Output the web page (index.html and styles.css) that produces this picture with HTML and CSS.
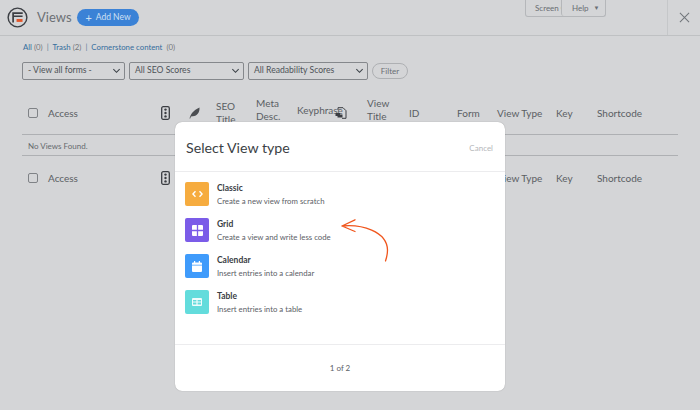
FILE: index.html
```html
<!DOCTYPE html>
<html lang="en">
<head>
<meta charset="utf-8">
<title>Views</title>
<link rel="stylesheet" href="styles.css">
</head>
<body>
<div class="page">
  <header class="topbar">
    <svg class="logo" viewBox="0 0 22 22"><circle cx="11" cy="11" r="9.800" fill="none" stroke="#3c3f44" stroke-width="1.500"/><path d="M5.500 5.500h11v1.800H7.300v1.600h9v1.500h-9v5.800H5.500z" fill="#3c3f44"/><rect x="10" y="12.600" width="6.300" height="3" fill="#e4562a"/></svg>
    <h1 class="title">Views</h1>
    <a class="add-new"><span class="plus">+</span> Add New</a>
    <div class="tabs">
      <span class="tab tab-screen">Screen Options</span>
      <span class="tab tab-help">Help <i class="caret">▼</i></span>
    </div>
    <div class="close"><svg viewBox="0 0 12 12" width="11" height="11"><path d="M1 1l10 10M11 1L1 11" stroke="#70757a" stroke-width="1.100" fill="none"/></svg></div>
  </header>
  <main class="content">
    <ul class="subsub">
      <li><a>All</a> (0)</li><li class="sep">|</li>
      <li><a>Trash</a> (2)</li><li class="sep">|</li>
      <li><a>Cornerstone content</a> &nbsp;(0)</li>
    </ul>
    <div class="filters">
      <div class="select s1">- View all forms -<svg class="chev" viewBox="0 0 10 6"><path d="M1.500 1l3.500 3.500L8.500 1" fill="none" stroke="#3c4248" stroke-width="1.200"/></svg></div>
      <div class="select s2">All SEO Scores<svg class="chev" viewBox="0 0 10 6"><path d="M1.500 1l3.500 3.500L8.500 1" fill="none" stroke="#3c4248" stroke-width="1.200"/></svg></div>
      <div class="select s3">All Readability Scores<svg class="chev" viewBox="0 0 10 6"><path d="M1.500 1l3.500 3.500L8.500 1" fill="none" stroke="#3c4248" stroke-width="1.200"/></svg></div>
      <button class="filter">Filter</button>
    </div>
    <div class="table">
      <div class="row head">
        <span class="cb"></span><span>Access</span>
        <svg class="ico-traffic" viewBox="0 0 9 14"><rect x=".7" y=".7" width="7.600" height="12.600" rx="1.500" fill="none" stroke="#3a3d42" stroke-width="1.300"/><circle cx="4.500" cy="3.600" r="1.200" fill="#3a3d42"/><circle cx="4.500" cy="7" r="1.200" fill="#3a3d42"/><circle cx="4.500" cy="10.400" r="1.200" fill="#3a3d42"/></svg>
        <svg class="ico-feather" viewBox="0 0 11 12"><path d="M.5 11.500C1.500 8 3.500 3.500 10.500.5 10.800 5 8.500 9 3.800 9.300L2 9.500 1.200 11.500z" fill="#4b4e52"/></svg>
        <span class="narrow">SEO Title</span><span class="narrow raise">Meta Desc.</span><span class="nowrap raise-sm">Keyphrase</span>
        <svg class="ico-links" viewBox="0 0 12 12"><path d="M3 3V.7h5l3 3v7.600H7" fill="none" stroke="#3a3d42" stroke-width="1"/><path d="M.5 6h4.500v1.500h2.500v3H2.500V9H.5z" fill="#3a3d42"/></svg>
        <span class="narrow raise">View Title</span><span>ID</span><span>Form</span><span>View Type</span><span>Key</span><span>Shortcode</span>
      </div>
      <div class="empty">No Views Found.</div>
      <div class="row foot">
        <span class="cb"></span><span>Access</span>
        <svg class="ico-traffic" viewBox="0 0 9 14"><rect x=".7" y=".7" width="7.600" height="12.600" rx="1.500" fill="none" stroke="#3a3d42" stroke-width="1.300"/><circle cx="4.500" cy="3.600" r="1.200" fill="#3a3d42"/><circle cx="4.500" cy="7" r="1.200" fill="#3a3d42"/><circle cx="4.500" cy="10.400" r="1.200" fill="#3a3d42"/></svg>
        <span></span><span></span><span></span><span></span><span></span><span></span><span></span><span></span>
        <span>View Type</span><span>Key</span><span>Shortcode</span>
      </div>
    </div>
  </main>
</div>
<section class="modal">
  <div class="modal-head"><h2>Select View type</h2><a class="cancel">Cancel</a></div>
  <div class="modal-body">
    <div class="type"><span class="tile orange"><svg viewBox="0 0 12 8" width="11" height="8"><path d="M3.800 1L1 4l2.800 3M8.200 1L11 4 8.200 7" fill="none" stroke="#fff" stroke-width="1.500"/></svg></span><div><b>Classic</b><p>Create a new view from scratch</p></div></div>
    <div class="type"><span class="tile purple"><svg viewBox="0 0 10 10" width="11" height="11"><path d="M0 1a1 1 0 0 1 1-1h3.400v4.400H0zM5.600 0H9a1 1 0 0 1 1 1v3.400H5.600zM0 5.600h4.400V10H1a1 1 0 0 1-1-1zM5.600 5.600H10V9a1 1 0 0 1-1 1H5.600z" fill="#fff"/></svg></span><div><b>Grid</b><p>Create a view and write less code</p></div></div>
    <div class="type"><span class="tile blue"><svg viewBox="0 0 10 11" width="10" height="11"><path d="M2 0h1.200v1.500h3.600V0H8v1.500h1a1 1 0 0 1 1 1V3.800H0V2.500a1 1 0 0 1 1-1h1zM0 4.600h10V10a1 1 0 0 1-1 1H1a1 1 0 0 1-1-1z" fill="#fff"/></svg></span><div><b>Calendar</b><p>Insert entries into a calendar</p></div></div>
    <div class="type"><span class="tile teal"><svg viewBox="0 0 10 8" width="10" height="8"><path fill-rule="evenodd" d="M1 0h8a1 1 0 0 1 1 1v6a1 1 0 0 1-1 1H1a1 1 0 0 1-1-1V1a1 1 0 0 1 1-1zM1 2v1.600h3.400V2zM5.600 2v1.600H9V2zM1 4.600v1.900h3.400V4.600zM5.600 4.600v1.900H9V4.600z" fill="#fff" opacity=".9"/></svg></span><div><b>Table</b><p>Insert entries into a table</p></div></div>
  </div>
  <div class="modal-foot">1 of 2</div>
  <svg class="arrow" viewBox="0 0 60 50" width="60" height="50"><path d="M1 7C20 5 46 12 46.500 31 46.500 35 45.500 39 44.500 42M14 .8L1 7l13 5.500" fill="none" stroke="#f0561d" stroke-width="1.300" stroke-linecap="round" stroke-linejoin="round"/></svg>
</section>
</body>
</html>
```
FILE: styles.css
```css
* { box-sizing: border-box; }
html, body { margin: 0; height: 100%; }
body {
  width: 700px; height: 410px; overflow: hidden; position: relative;
  background: #d4d5d7; color: #55585d;
  font: 9px/1.3 Lato, "Open Sans", sans-serif;
}
.page { height: 100%; }
.topbar {
  height: 36px; border-bottom: 1px solid #bfc1c3; display: flex; align-items: center;
  padding-left: 7px; position: relative;
}
.logo { width: 21px; height: 21px; flex: none; }
.title { margin: 0 0 0 9px; font-size: 13px; font-weight: 400; color: #6c7075; width: 33px; }
.add-new {
  margin-left: 7px; width: 62px; height: 17px; border-radius: 9px; background: #3b82d6;
  color: #cfe0f3; font-size: 8.500px; display: flex; align-items: center; justify-content: center; gap: 4px;
}
.plus { font-size: 11px; line-height: 1; }
.tabs { display: flex; margin-left: auto; margin-right: 61px; height: 17px; align-self: flex-start; border: 1px solid #b5b7ba; border-top: 0; border-radius: 0 0 3px 3px; }
.tab { font-size: 8px; color: #6a6e73; display: flex; align-items: center; }
.tab-screen { width: 35px; padding-left: 9px; overflow: hidden; white-space: nowrap; }
.tab-help { width: 44px; padding-left: 10px; gap: 5px; border-left: 1px solid #b5b7ba; border-radius: 0 0 3px 3px; }
.caret { font-size: 6px; font-style: normal; }
.close { width: 33px; height: 35px; border-left: 1px solid #c5c7c9; display: flex; align-items: center; justify-content: center; }
.content { padding: 0 22px; }
.subsub { list-style: none; margin: 0; padding: 6px 0 0 1px; display: flex; gap: 3px; height: 26px; font-size: 7.800px; color: #74777b; align-items: flex-start; }
.subsub a { color: #356d9d; }
.sep { color: #5e7d98; margin: 0 1px; }
.filters { display: flex; align-items: center; gap: 4px; height: 18px; }
.select {
  height: 18px; border: 1px solid #85888c; border-radius: 2px; padding-left: 5px; display: flex; align-items: center; justify-content: space-between; padding-right: 3px;
  font-size: 8.600px; color: #4e5358;
}
.s1 { width: 103px; }
.s2 { width: 115px; }
.s3 { width: 120px; }
.chev { width: 9px; height: 6px; }
.filter { width: 36px; height: 16px; border: 1px solid #aeb0b3; border-radius: 8px; background: transparent; font: 8px Lato, sans-serif; color: #6a6e73; padding: 0; }
.table { margin-top: 15px; }
.row {
  display: grid; align-items: center;
  grid-template-columns: 26px 113px 28px 27px 40px 41px 38px 32px 42px 48px 40px 59px 41px 81px;
  font-size: 10px; line-height: 13px; color: #5a5e63;
}
.head { height: 40px; padding-bottom: 3px; border-bottom: 1px solid #aeb0b3; }
.foot { height: 44px; }
.narrow { width: 30px; }
.raise { margin-bottom: 7px; }
.raise-sm { margin-bottom: 6px; }
.cb { width: 10px; height: 10px; margin-left: 6px; border: 1px solid #7f8286; border-radius: 2px; }
.nowrap { white-space: nowrap; }
.ico-traffic { width: 9px; height: 14px; }
.ico-feather { width: 11px; height: 12px; }
.ico-links { width: 12px; height: 12px; }
.empty { height: 21px; border-bottom: 1px solid #aeb0b3; padding: 2px 0 0 6px; font-size: 8px; line-height: 18px; color: #666a6e; }
.modal {
  position: absolute; left: 175px; top: 122px; width: 330px; height: 269px; background: #fff;
  border-radius: 7px; display: flex; flex-direction: column; box-shadow: 0 0 1px rgba(0,0,0,.35);
}
.modal-head { height: 50px; flex: none; border-bottom: 1px solid #ececee; display: flex; align-items: center; justify-content: space-between; padding: 3px 12px 0 11px; }
.modal-head h2 { margin: 0; font-size: 14.200px; font-weight: 400; color: #3b3f45; }
.cancel { font-size: 8px; color: #b5b7ba; }
.modal-body { flex: 1; padding: 10px 10px 0; display: flex; flex-direction: column; gap: 12px; }
.type { display: flex; gap: 8px; height: 24px; }
.tile { width: 24px; height: 24px; border-radius: 2px; display: flex; align-items: center; justify-content: center; flex: none; }
.orange { background: #f6ac3f; }
.purple { background: #7b5ce8; }
.blue { background: #3f9bfb; }
.teal { background: #63dcdc; }
.type b { display: block; font-size: 8.500px; line-height: 12px; font-weight: 700; color: #3a3e44; }
.type p { margin: 1px 0 0; font-size: 7.800px; line-height: 12px; color: #5b6066; }
.modal-foot { height: 47px; flex: none; border-top: 1px solid #ececee; display: flex; align-items: center; justify-content: center; font-size: 8px; color: #5b6066; }
.arrow { position: absolute; left: 166px; top: 97px; }
```
